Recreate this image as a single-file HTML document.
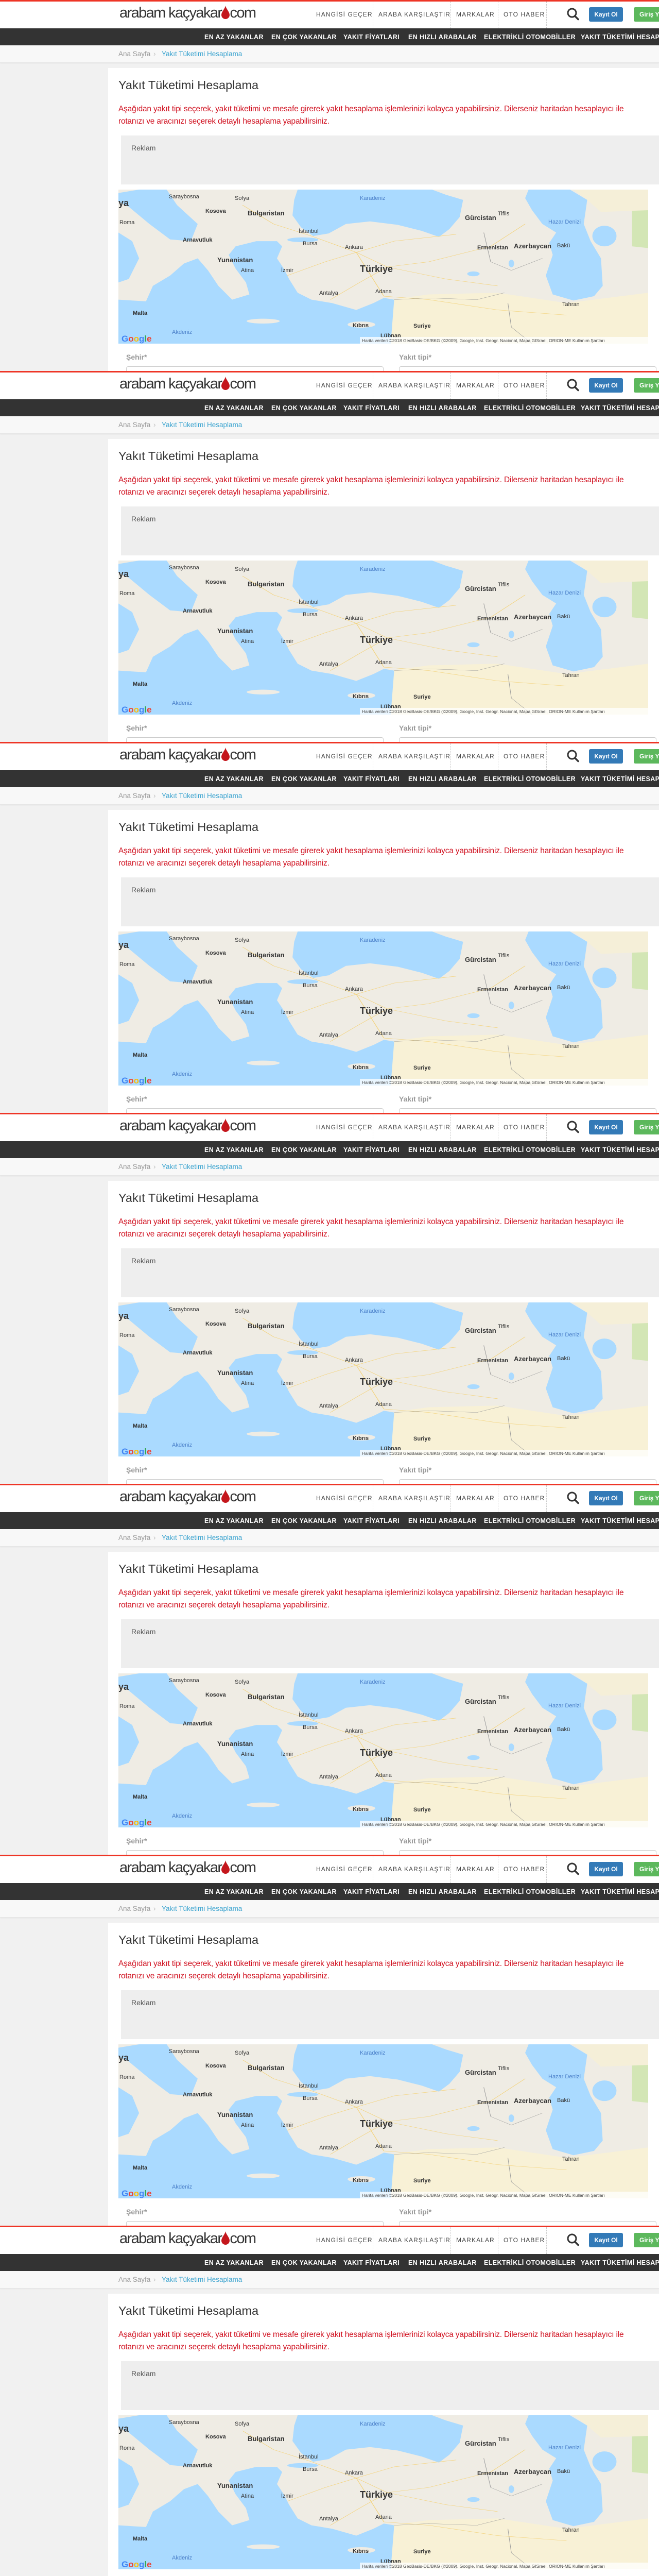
<!DOCTYPE html>
<html style="width:1280px;height:5381px;overflow:hidden"><head><meta charset="utf-8">
<style>
*{margin:0;padding:0;box-sizing:border-box}
html,body{overflow:hidden}
body{width:1280px;height:5381px;background:#f1f1f1;font-family:"Liberation Sans",sans-serif;position:relative;overflow:hidden}
.sec{position:absolute;left:0;width:1280px;height:720px;overflow:hidden;background:#f1f1f1}
.sec.last{height:1061px}
.red{position:absolute;left:0;top:0;width:1280px;height:3px;background:#ee3526}
.hdr{position:absolute;left:0;top:3px;width:1280px;height:52px;background:#fff}
.logo{position:absolute;left:232px;top:9px;font-size:29px;letter-spacing:-1.6px;color:#333;white-space:nowrap}
.logo svg{vertical-align:-3px}
.tm{position:absolute;top:21px;font-size:12px;letter-spacing:1.1px;color:#444;white-space:nowrap}
.sep{position:absolute;top:3px;height:52px;border-left:1px dashed #ccc}
.btn{position:absolute;top:14px;height:28px;border-radius:3px;color:#fff;font-weight:bold;font-size:12px;line-height:28px;text-align:center;white-space:nowrap;overflow:hidden}
.dark{position:absolute;left:0;top:55px;width:1280px;height:33px;background:#333;overflow:hidden}
.dm{position:absolute;top:10px;font-size:12.5px;font-weight:bold;color:#fff;letter-spacing:.4px;white-space:nowrap}
.bc{position:absolute;left:0;top:88px;width:1280px;height:34px;background:#f8f8f8;border-bottom:1px solid #e6e6e6;box-shadow:0 1px 2px rgba(0,0,0,.06);font-size:13.5px;white-space:nowrap}
.box{position:absolute;left:210px;top:132px;width:1070px;height:940px;background:#fff}
.title{position:absolute;left:230px;top:152px;font-size:23.5px;color:#333;white-space:nowrap}
.desc{position:absolute;left:230px;top:200px;width:1050px;overflow:hidden;font-size:15.4px;line-height:24px;color:#d0101f;white-space:nowrap;letter-spacing:-.15px}
.ad{position:absolute;left:235px;top:263px;width:1045px;height:95px;background:#eee}
.ad span{position:absolute;left:20px;top:16px;font-size:14px;color:#555}
.map{position:absolute;left:230px;width:1029px;height:299px;overflow:hidden;background:#efece4}
.lbl{position:absolute;font-size:14px;font-weight:bold;color:#999}
.inp{position:absolute;height:40px;border:1px solid #ccc;border-radius:4px;background:#fff}
</style></head><body>
<svg width="0" height="0" style="position:absolute;left:0;top:0">
<defs>
<g id="mg">
<g transform="scale(0.6695,0.3337)">
<rect width="1537" height="896" fill="#efece4"/>
<polygon fill="#f8f1d6" points="790,640 900,610 1100,600 1300,660 1537,600 1537,896 790,896"/>
<polygon fill="#d3e6b5" points="1490,120 1537,100 1537,340 1490,330"/>
<polygon fill="#f5efd8" points="1320,0 1537,0 1537,120 1400,130 1360,60"/>
<polygon fill="#aadaff" points="60,0 140,0 170,90 230,200 210,300 150,290 90,200 30,100 0,70 0,20"/>
<polygon fill="#aadaff" points="0,250 40,300 60,400 30,520 0,540"/>
<polygon fill="#aadaff" points="0,896 0,640 80,650 100,560 150,500 190,430 230,400 260,470 290,560 330,640 380,610 370,540 340,460 320,380 340,330 400,300 460,300 475,330 460,400 480,460 495,520 520,600 560,640 620,660 690,700 740,660 770,630 800,640 790,896"/>
<polygon fill="#aadaff" points="520,0 910,0 950,30 1000,60 990,160 960,230 930,275 880,240 810,205 730,185 660,200 610,255 565,270 530,220 505,150 510,60"/>
<ellipse fill="#aadaff" cx="535" cy="292" rx="45" ry="14"/>
<polygon fill="#aadaff" points="1190,0 1310,0 1360,60 1350,200 1370,300 1400,400 1405,560 1380,620 1320,645 1260,610 1240,500 1260,380 1250,310 1270,250 1230,200 1200,120 1180,50"/>
<ellipse fill="#aadaff" cx="1410" cy="270" rx="35" ry="60"/>
<ellipse fill="#efece4" cx="420" cy="765" rx="48" ry="14"/>
<ellipse fill="#efece4" cx="705" cy="785" rx="40" ry="18"/>
<ellipse fill="#aadaff" cx="1030" cy="490" rx="18" ry="14"/>
<ellipse fill="#aadaff" cx="1140" cy="430" rx="8" ry="22"/>
<g fill="none" stroke="#f3d27a" stroke-width="2">
<path d="M560,270 L690,365 L780,450 L900,420 L1080,330 L1180,200"/>
<path d="M690,365 L770,620 L900,640 L1100,700 L1300,730"/>
<path d="M490,500 L600,420 L690,365 L800,300 L980,260"/>
<path d="M615,640 L700,540 L780,450 L950,520 L1100,560"/>
<path d="M360,90 L450,200 L560,270"/>
</g>
<g fill="none" stroke="#9a9a9a" stroke-width="1.5">
<path d="M800,640 L900,630 L1040,640 L1120,600"/>
<path d="M1060,250 L1080,420 L1140,470 L1230,400"/>
<path d="M1130,660 L1140,800 L1200,896"/>
</g>
</g>
</g>
</defs>
</svg>

<div class="sec" style="top:0px">
<div class="red"></div><div class="hdr"></div>
<div class="logo">arabam kaçyakar<svg width="16" height="26" viewBox="0 0 16 26"><path d="M8,0 C9,6 16,12 16,18 A8,8 0 0 1 0,18 C0,12 7,6 8,0Z" fill="#c4161c"/></svg>com</div>
<div class="tm" style="left:614px">HANGİSİ GEÇER</div><div class="sep" style="left:724px"></div>
<div class="tm" style="left:735px">ARABA KARŞILAŞTIR</div><div class="sep" style="left:875px"></div>
<div class="tm" style="left:886px">MARKALAR</div><div class="sep" style="left:967px"></div>
<div class="tm" style="left:978px">OTO HABER</div><div class="sep" style="left:1061px"></div>
<svg style="position:absolute;left:1100px;top:15px" width="26" height="26" viewBox="0 0 26 26"><circle cx="11" cy="10" r="8" fill="none" stroke="#333" stroke-width="3"/><path d="M16.5,16 L23,22.5" stroke="#333" stroke-width="3.5" stroke-linecap="round"/></svg>
<div class="btn" style="left:1144px;width:66px;background:#337ab7">Kayıt Ol</div>
<div class="btn" style="left:1231px;width:49px;background:#5cb85c;text-align:left;padding-left:11px;border-radius:3px 0 0 3px">Giriş Yap</div>
<div class="dark"><div class="dm" style="left:397px">EN AZ YAKANLAR</div><div class="dm" style="left:527px">EN ÇOK YAKANLAR</div><div class="dm" style="left:667px">YAKIT FİYATLARI</div><div class="dm" style="left:793px">EN HIZLI ARABALAR</div><div class="dm" style="left:940px">ELEKTRİKLİ OTOMOBİLLER</div><div class="dm" style="left:1128px">YAKIT TÜKETİMİ HESAPLAMA</div></div>
<div class="bc"><span style="position:absolute;left:230px;top:9px;color:#999">Ana Sayfa</span><span style="position:absolute;left:298px;top:9px;color:#bbb">›</span><span style="position:absolute;left:314px;top:9px;color:#3aa3cf">Yakıt Tüketimi Hesaplama</span></div>
<div class="box"></div>
<div class="title">Yakıt Tüketimi Hesaplama</div>
<div class="desc">Aşağıdan yakıt tipi seçerek, yakıt tüketimi ve mesafe girerek yakıt hesaplama işlemlerinizi kolayca yapabilirsiniz. Dilerseniz haritadan hesaplayıcı ile<br>rotanızı ve aracınızı seçerek detaylı hesaplama yapabilirsiniz.</div>
<div class="ad"><span>Reklam</span></div>
<div class="map" style="top:368px"><svg width="1029" height="299" viewBox="0 0 1029 299" font-family="Liberation Sans, sans-serif"><use href="#mg"/><g font-size="11" fill="#333"><text x="469" y="160" font-size="18" font-weight="bold">Türkiye</text><text x="469" y="20" fill="#4a7fc9">Karadeniz</text><text x="251" y="50" font-weight="bold" font-size="13">Bulgaristan</text><text x="192" y="141" font-weight="bold" font-size="13">Yunanistan</text><text x="673" y="59" font-weight="bold" font-size="13">Gürcistan</text><text x="768" y="114" font-weight="bold" font-size="13">Azerbaycan</text><text x="697" y="116" font-weight="bold">Ermenistan</text><text x="835" y="66" fill="#4a7fc9">Hazar Denizi</text><text x="440" y="115">Ankara</text><text x="350" y="84">İstanbul</text><text x="358" y="108">Bursa</text><text x="316" y="160">İzmir</text><text x="238" y="160">Atina</text><text x="390" y="204">Antalya</text><text x="499" y="201">Adana</text><text x="573" y="268" font-weight="bold">Suriye</text><text x="455" y="267" font-weight="bold">Kıbrıs</text><text x="104" y="280" fill="#4a7fc9">Akdeniz</text><text x="28" y="243" font-weight="bold">Malta</text><text x="862" y="226">Tahran</text><text x="226" y="20">Sofya</text><text x="98" y="17">Saraybosna</text><text x="2" y="67">Roma</text><text x="169" y="45" font-weight="bold">Kosova</text><text x="125" y="101" font-weight="bold">Arnavutluk</text><text x="852" y="112">Bakü</text><text x="737" y="50">Tiflis</text><text x="509" y="287" font-weight="bold">Lübnan</text><text x="0" y="32" font-size="18" font-weight="bold">ya</text></g><text x="6" y="295" font-size="17" font-weight="bold"><tspan fill="#4285f4">G</tspan><tspan fill="#ea4335">o</tspan><tspan fill="#fbbc05">o</tspan><tspan fill="#4285f4">g</tspan><tspan fill="#34a853">l</tspan><tspan fill="#ea4335">e</tspan></text><rect x="469" y="286" width="560" height="13" fill="#fff" opacity=".75"/><text x="473" y="296" font-size="8.5" fill="#444">Harita verileri ©2018 GeoBasis-DE/BKG (©2009), Google, Inst. Geogr. Nacional, Mapa GISrael, ORION-ME    Kullanım Şartları</text></svg></div>
<div class="lbl" style="left:245px;top:685px">Şehir*</div><div class="lbl" style="left:775px;top:685px">Yakıt tipi*</div>
<div class="inp" style="left:245px;top:711px;width:500px"></div><div class="inp" style="left:775px;top:711px;width:500px"></div>
</div>

<div class="sec" style="top:720px">
<div class="red"></div><div class="hdr"></div>
<div class="logo">arabam kaçyakar<svg width="16" height="26" viewBox="0 0 16 26"><path d="M8,0 C9,6 16,12 16,18 A8,8 0 0 1 0,18 C0,12 7,6 8,0Z" fill="#c4161c"/></svg>com</div>
<div class="tm" style="left:614px">HANGİSİ GEÇER</div><div class="sep" style="left:724px"></div>
<div class="tm" style="left:735px">ARABA KARŞILAŞTIR</div><div class="sep" style="left:875px"></div>
<div class="tm" style="left:886px">MARKALAR</div><div class="sep" style="left:967px"></div>
<div class="tm" style="left:978px">OTO HABER</div><div class="sep" style="left:1061px"></div>
<svg style="position:absolute;left:1100px;top:15px" width="26" height="26" viewBox="0 0 26 26"><circle cx="11" cy="10" r="8" fill="none" stroke="#333" stroke-width="3"/><path d="M16.5,16 L23,22.5" stroke="#333" stroke-width="3.5" stroke-linecap="round"/></svg>
<div class="btn" style="left:1144px;width:66px;background:#337ab7">Kayıt Ol</div>
<div class="btn" style="left:1231px;width:49px;background:#5cb85c;text-align:left;padding-left:11px;border-radius:3px 0 0 3px">Giriş Yap</div>
<div class="dark"><div class="dm" style="left:397px">EN AZ YAKANLAR</div><div class="dm" style="left:527px">EN ÇOK YAKANLAR</div><div class="dm" style="left:667px">YAKIT FİYATLARI</div><div class="dm" style="left:793px">EN HIZLI ARABALAR</div><div class="dm" style="left:940px">ELEKTRİKLİ OTOMOBİLLER</div><div class="dm" style="left:1128px">YAKIT TÜKETİMİ HESAPLAMA</div></div>
<div class="bc"><span style="position:absolute;left:230px;top:9px;color:#999">Ana Sayfa</span><span style="position:absolute;left:298px;top:9px;color:#bbb">›</span><span style="position:absolute;left:314px;top:9px;color:#3aa3cf">Yakıt Tüketimi Hesaplama</span></div>
<div class="box"></div>
<div class="title">Yakıt Tüketimi Hesaplama</div>
<div class="desc">Aşağıdan yakıt tipi seçerek, yakıt tüketimi ve mesafe girerek yakıt hesaplama işlemlerinizi kolayca yapabilirsiniz. Dilerseniz haritadan hesaplayıcı ile<br>rotanızı ve aracınızı seçerek detaylı hesaplama yapabilirsiniz.</div>
<div class="ad"><span>Reklam</span></div>
<div class="map" style="top:368px"><svg width="1029" height="299" viewBox="0 0 1029 299" font-family="Liberation Sans, sans-serif"><use href="#mg"/><g font-size="11" fill="#333"><text x="469" y="160" font-size="18" font-weight="bold">Türkiye</text><text x="469" y="20" fill="#4a7fc9">Karadeniz</text><text x="251" y="50" font-weight="bold" font-size="13">Bulgaristan</text><text x="192" y="141" font-weight="bold" font-size="13">Yunanistan</text><text x="673" y="59" font-weight="bold" font-size="13">Gürcistan</text><text x="768" y="114" font-weight="bold" font-size="13">Azerbaycan</text><text x="697" y="116" font-weight="bold">Ermenistan</text><text x="835" y="66" fill="#4a7fc9">Hazar Denizi</text><text x="440" y="115">Ankara</text><text x="350" y="84">İstanbul</text><text x="358" y="108">Bursa</text><text x="316" y="160">İzmir</text><text x="238" y="160">Atina</text><text x="390" y="204">Antalya</text><text x="499" y="201">Adana</text><text x="573" y="268" font-weight="bold">Suriye</text><text x="455" y="267" font-weight="bold">Kıbrıs</text><text x="104" y="280" fill="#4a7fc9">Akdeniz</text><text x="28" y="243" font-weight="bold">Malta</text><text x="862" y="226">Tahran</text><text x="226" y="20">Sofya</text><text x="98" y="17">Saraybosna</text><text x="2" y="67">Roma</text><text x="169" y="45" font-weight="bold">Kosova</text><text x="125" y="101" font-weight="bold">Arnavutluk</text><text x="852" y="112">Bakü</text><text x="737" y="50">Tiflis</text><text x="509" y="287" font-weight="bold">Lübnan</text><text x="0" y="32" font-size="18" font-weight="bold">ya</text></g><text x="6" y="295" font-size="17" font-weight="bold"><tspan fill="#4285f4">G</tspan><tspan fill="#ea4335">o</tspan><tspan fill="#fbbc05">o</tspan><tspan fill="#4285f4">g</tspan><tspan fill="#34a853">l</tspan><tspan fill="#ea4335">e</tspan></text><rect x="469" y="286" width="560" height="13" fill="#fff" opacity=".75"/><text x="473" y="296" font-size="8.5" fill="#444">Harita verileri ©2018 GeoBasis-DE/BKG (©2009), Google, Inst. Geogr. Nacional, Mapa GISrael, ORION-ME    Kullanım Şartları</text></svg></div>
<div class="lbl" style="left:245px;top:685px">Şehir*</div><div class="lbl" style="left:775px;top:685px">Yakıt tipi*</div>
<div class="inp" style="left:245px;top:711px;width:500px"></div><div class="inp" style="left:775px;top:711px;width:500px"></div>
</div>

<div class="sec" style="top:1440px">
<div class="red"></div><div class="hdr"></div>
<div class="logo">arabam kaçyakar<svg width="16" height="26" viewBox="0 0 16 26"><path d="M8,0 C9,6 16,12 16,18 A8,8 0 0 1 0,18 C0,12 7,6 8,0Z" fill="#c4161c"/></svg>com</div>
<div class="tm" style="left:614px">HANGİSİ GEÇER</div><div class="sep" style="left:724px"></div>
<div class="tm" style="left:735px">ARABA KARŞILAŞTIR</div><div class="sep" style="left:875px"></div>
<div class="tm" style="left:886px">MARKALAR</div><div class="sep" style="left:967px"></div>
<div class="tm" style="left:978px">OTO HABER</div><div class="sep" style="left:1061px"></div>
<svg style="position:absolute;left:1100px;top:15px" width="26" height="26" viewBox="0 0 26 26"><circle cx="11" cy="10" r="8" fill="none" stroke="#333" stroke-width="3"/><path d="M16.5,16 L23,22.5" stroke="#333" stroke-width="3.5" stroke-linecap="round"/></svg>
<div class="btn" style="left:1144px;width:66px;background:#337ab7">Kayıt Ol</div>
<div class="btn" style="left:1231px;width:49px;background:#5cb85c;text-align:left;padding-left:11px;border-radius:3px 0 0 3px">Giriş Yap</div>
<div class="dark"><div class="dm" style="left:397px">EN AZ YAKANLAR</div><div class="dm" style="left:527px">EN ÇOK YAKANLAR</div><div class="dm" style="left:667px">YAKIT FİYATLARI</div><div class="dm" style="left:793px">EN HIZLI ARABALAR</div><div class="dm" style="left:940px">ELEKTRİKLİ OTOMOBİLLER</div><div class="dm" style="left:1128px">YAKIT TÜKETİMİ HESAPLAMA</div></div>
<div class="bc"><span style="position:absolute;left:230px;top:9px;color:#999">Ana Sayfa</span><span style="position:absolute;left:298px;top:9px;color:#bbb">›</span><span style="position:absolute;left:314px;top:9px;color:#3aa3cf">Yakıt Tüketimi Hesaplama</span></div>
<div class="box"></div>
<div class="title">Yakıt Tüketimi Hesaplama</div>
<div class="desc">Aşağıdan yakıt tipi seçerek, yakıt tüketimi ve mesafe girerek yakıt hesaplama işlemlerinizi kolayca yapabilirsiniz. Dilerseniz haritadan hesaplayıcı ile<br>rotanızı ve aracınızı seçerek detaylı hesaplama yapabilirsiniz.</div>
<div class="ad"><span>Reklam</span></div>
<div class="map" style="top:368px"><svg width="1029" height="299" viewBox="0 0 1029 299" font-family="Liberation Sans, sans-serif"><use href="#mg"/><g font-size="11" fill="#333"><text x="469" y="160" font-size="18" font-weight="bold">Türkiye</text><text x="469" y="20" fill="#4a7fc9">Karadeniz</text><text x="251" y="50" font-weight="bold" font-size="13">Bulgaristan</text><text x="192" y="141" font-weight="bold" font-size="13">Yunanistan</text><text x="673" y="59" font-weight="bold" font-size="13">Gürcistan</text><text x="768" y="114" font-weight="bold" font-size="13">Azerbaycan</text><text x="697" y="116" font-weight="bold">Ermenistan</text><text x="835" y="66" fill="#4a7fc9">Hazar Denizi</text><text x="440" y="115">Ankara</text><text x="350" y="84">İstanbul</text><text x="358" y="108">Bursa</text><text x="316" y="160">İzmir</text><text x="238" y="160">Atina</text><text x="390" y="204">Antalya</text><text x="499" y="201">Adana</text><text x="573" y="268" font-weight="bold">Suriye</text><text x="455" y="267" font-weight="bold">Kıbrıs</text><text x="104" y="280" fill="#4a7fc9">Akdeniz</text><text x="28" y="243" font-weight="bold">Malta</text><text x="862" y="226">Tahran</text><text x="226" y="20">Sofya</text><text x="98" y="17">Saraybosna</text><text x="2" y="67">Roma</text><text x="169" y="45" font-weight="bold">Kosova</text><text x="125" y="101" font-weight="bold">Arnavutluk</text><text x="852" y="112">Bakü</text><text x="737" y="50">Tiflis</text><text x="509" y="287" font-weight="bold">Lübnan</text><text x="0" y="32" font-size="18" font-weight="bold">ya</text></g><text x="6" y="295" font-size="17" font-weight="bold"><tspan fill="#4285f4">G</tspan><tspan fill="#ea4335">o</tspan><tspan fill="#fbbc05">o</tspan><tspan fill="#4285f4">g</tspan><tspan fill="#34a853">l</tspan><tspan fill="#ea4335">e</tspan></text><rect x="469" y="286" width="560" height="13" fill="#fff" opacity=".75"/><text x="473" y="296" font-size="8.5" fill="#444">Harita verileri ©2018 GeoBasis-DE/BKG (©2009), Google, Inst. Geogr. Nacional, Mapa GISrael, ORION-ME    Kullanım Şartları</text></svg></div>
<div class="lbl" style="left:245px;top:685px">Şehir*</div><div class="lbl" style="left:775px;top:685px">Yakıt tipi*</div>
<div class="inp" style="left:245px;top:711px;width:500px"></div><div class="inp" style="left:775px;top:711px;width:500px"></div>
</div>

<div class="sec" style="top:2160px">
<div class="red"></div><div class="hdr"></div>
<div class="logo">arabam kaçyakar<svg width="16" height="26" viewBox="0 0 16 26"><path d="M8,0 C9,6 16,12 16,18 A8,8 0 0 1 0,18 C0,12 7,6 8,0Z" fill="#c4161c"/></svg>com</div>
<div class="tm" style="left:614px">HANGİSİ GEÇER</div><div class="sep" style="left:724px"></div>
<div class="tm" style="left:735px">ARABA KARŞILAŞTIR</div><div class="sep" style="left:875px"></div>
<div class="tm" style="left:886px">MARKALAR</div><div class="sep" style="left:967px"></div>
<div class="tm" style="left:978px">OTO HABER</div><div class="sep" style="left:1061px"></div>
<svg style="position:absolute;left:1100px;top:15px" width="26" height="26" viewBox="0 0 26 26"><circle cx="11" cy="10" r="8" fill="none" stroke="#333" stroke-width="3"/><path d="M16.5,16 L23,22.5" stroke="#333" stroke-width="3.5" stroke-linecap="round"/></svg>
<div class="btn" style="left:1144px;width:66px;background:#337ab7">Kayıt Ol</div>
<div class="btn" style="left:1231px;width:49px;background:#5cb85c;text-align:left;padding-left:11px;border-radius:3px 0 0 3px">Giriş Yap</div>
<div class="dark"><div class="dm" style="left:397px">EN AZ YAKANLAR</div><div class="dm" style="left:527px">EN ÇOK YAKANLAR</div><div class="dm" style="left:667px">YAKIT FİYATLARI</div><div class="dm" style="left:793px">EN HIZLI ARABALAR</div><div class="dm" style="left:940px">ELEKTRİKLİ OTOMOBİLLER</div><div class="dm" style="left:1128px">YAKIT TÜKETİMİ HESAPLAMA</div></div>
<div class="bc"><span style="position:absolute;left:230px;top:9px;color:#999">Ana Sayfa</span><span style="position:absolute;left:298px;top:9px;color:#bbb">›</span><span style="position:absolute;left:314px;top:9px;color:#3aa3cf">Yakıt Tüketimi Hesaplama</span></div>
<div class="box"></div>
<div class="title">Yakıt Tüketimi Hesaplama</div>
<div class="desc">Aşağıdan yakıt tipi seçerek, yakıt tüketimi ve mesafe girerek yakıt hesaplama işlemlerinizi kolayca yapabilirsiniz. Dilerseniz haritadan hesaplayıcı ile<br>rotanızı ve aracınızı seçerek detaylı hesaplama yapabilirsiniz.</div>
<div class="ad"><span>Reklam</span></div>
<div class="map" style="top:368px"><svg width="1029" height="299" viewBox="0 0 1029 299" font-family="Liberation Sans, sans-serif"><use href="#mg"/><g font-size="11" fill="#333"><text x="469" y="160" font-size="18" font-weight="bold">Türkiye</text><text x="469" y="20" fill="#4a7fc9">Karadeniz</text><text x="251" y="50" font-weight="bold" font-size="13">Bulgaristan</text><text x="192" y="141" font-weight="bold" font-size="13">Yunanistan</text><text x="673" y="59" font-weight="bold" font-size="13">Gürcistan</text><text x="768" y="114" font-weight="bold" font-size="13">Azerbaycan</text><text x="697" y="116" font-weight="bold">Ermenistan</text><text x="835" y="66" fill="#4a7fc9">Hazar Denizi</text><text x="440" y="115">Ankara</text><text x="350" y="84">İstanbul</text><text x="358" y="108">Bursa</text><text x="316" y="160">İzmir</text><text x="238" y="160">Atina</text><text x="390" y="204">Antalya</text><text x="499" y="201">Adana</text><text x="573" y="268" font-weight="bold">Suriye</text><text x="455" y="267" font-weight="bold">Kıbrıs</text><text x="104" y="280" fill="#4a7fc9">Akdeniz</text><text x="28" y="243" font-weight="bold">Malta</text><text x="862" y="226">Tahran</text><text x="226" y="20">Sofya</text><text x="98" y="17">Saraybosna</text><text x="2" y="67">Roma</text><text x="169" y="45" font-weight="bold">Kosova</text><text x="125" y="101" font-weight="bold">Arnavutluk</text><text x="852" y="112">Bakü</text><text x="737" y="50">Tiflis</text><text x="509" y="287" font-weight="bold">Lübnan</text><text x="0" y="32" font-size="18" font-weight="bold">ya</text></g><text x="6" y="295" font-size="17" font-weight="bold"><tspan fill="#4285f4">G</tspan><tspan fill="#ea4335">o</tspan><tspan fill="#fbbc05">o</tspan><tspan fill="#4285f4">g</tspan><tspan fill="#34a853">l</tspan><tspan fill="#ea4335">e</tspan></text><rect x="469" y="286" width="560" height="13" fill="#fff" opacity=".75"/><text x="473" y="296" font-size="8.5" fill="#444">Harita verileri ©2018 GeoBasis-DE/BKG (©2009), Google, Inst. Geogr. Nacional, Mapa GISrael, ORION-ME    Kullanım Şartları</text></svg></div>
<div class="lbl" style="left:245px;top:685px">Şehir*</div><div class="lbl" style="left:775px;top:685px">Yakıt tipi*</div>
<div class="inp" style="left:245px;top:711px;width:500px"></div><div class="inp" style="left:775px;top:711px;width:500px"></div>
</div>

<div class="sec" style="top:2880px">
<div class="red"></div><div class="hdr"></div>
<div class="logo">arabam kaçyakar<svg width="16" height="26" viewBox="0 0 16 26"><path d="M8,0 C9,6 16,12 16,18 A8,8 0 0 1 0,18 C0,12 7,6 8,0Z" fill="#c4161c"/></svg>com</div>
<div class="tm" style="left:614px">HANGİSİ GEÇER</div><div class="sep" style="left:724px"></div>
<div class="tm" style="left:735px">ARABA KARŞILAŞTIR</div><div class="sep" style="left:875px"></div>
<div class="tm" style="left:886px">MARKALAR</div><div class="sep" style="left:967px"></div>
<div class="tm" style="left:978px">OTO HABER</div><div class="sep" style="left:1061px"></div>
<svg style="position:absolute;left:1100px;top:15px" width="26" height="26" viewBox="0 0 26 26"><circle cx="11" cy="10" r="8" fill="none" stroke="#333" stroke-width="3"/><path d="M16.5,16 L23,22.5" stroke="#333" stroke-width="3.5" stroke-linecap="round"/></svg>
<div class="btn" style="left:1144px;width:66px;background:#337ab7">Kayıt Ol</div>
<div class="btn" style="left:1231px;width:49px;background:#5cb85c;text-align:left;padding-left:11px;border-radius:3px 0 0 3px">Giriş Yap</div>
<div class="dark"><div class="dm" style="left:397px">EN AZ YAKANLAR</div><div class="dm" style="left:527px">EN ÇOK YAKANLAR</div><div class="dm" style="left:667px">YAKIT FİYATLARI</div><div class="dm" style="left:793px">EN HIZLI ARABALAR</div><div class="dm" style="left:940px">ELEKTRİKLİ OTOMOBİLLER</div><div class="dm" style="left:1128px">YAKIT TÜKETİMİ HESAPLAMA</div></div>
<div class="bc"><span style="position:absolute;left:230px;top:9px;color:#999">Ana Sayfa</span><span style="position:absolute;left:298px;top:9px;color:#bbb">›</span><span style="position:absolute;left:314px;top:9px;color:#3aa3cf">Yakıt Tüketimi Hesaplama</span></div>
<div class="box"></div>
<div class="title">Yakıt Tüketimi Hesaplama</div>
<div class="desc">Aşağıdan yakıt tipi seçerek, yakıt tüketimi ve mesafe girerek yakıt hesaplama işlemlerinizi kolayca yapabilirsiniz. Dilerseniz haritadan hesaplayıcı ile<br>rotanızı ve aracınızı seçerek detaylı hesaplama yapabilirsiniz.</div>
<div class="ad"><span>Reklam</span></div>
<div class="map" style="top:368px"><svg width="1029" height="299" viewBox="0 0 1029 299" font-family="Liberation Sans, sans-serif"><use href="#mg"/><g font-size="11" fill="#333"><text x="469" y="160" font-size="18" font-weight="bold">Türkiye</text><text x="469" y="20" fill="#4a7fc9">Karadeniz</text><text x="251" y="50" font-weight="bold" font-size="13">Bulgaristan</text><text x="192" y="141" font-weight="bold" font-size="13">Yunanistan</text><text x="673" y="59" font-weight="bold" font-size="13">Gürcistan</text><text x="768" y="114" font-weight="bold" font-size="13">Azerbaycan</text><text x="697" y="116" font-weight="bold">Ermenistan</text><text x="835" y="66" fill="#4a7fc9">Hazar Denizi</text><text x="440" y="115">Ankara</text><text x="350" y="84">İstanbul</text><text x="358" y="108">Bursa</text><text x="316" y="160">İzmir</text><text x="238" y="160">Atina</text><text x="390" y="204">Antalya</text><text x="499" y="201">Adana</text><text x="573" y="268" font-weight="bold">Suriye</text><text x="455" y="267" font-weight="bold">Kıbrıs</text><text x="104" y="280" fill="#4a7fc9">Akdeniz</text><text x="28" y="243" font-weight="bold">Malta</text><text x="862" y="226">Tahran</text><text x="226" y="20">Sofya</text><text x="98" y="17">Saraybosna</text><text x="2" y="67">Roma</text><text x="169" y="45" font-weight="bold">Kosova</text><text x="125" y="101" font-weight="bold">Arnavutluk</text><text x="852" y="112">Bakü</text><text x="737" y="50">Tiflis</text><text x="509" y="287" font-weight="bold">Lübnan</text><text x="0" y="32" font-size="18" font-weight="bold">ya</text></g><text x="6" y="295" font-size="17" font-weight="bold"><tspan fill="#4285f4">G</tspan><tspan fill="#ea4335">o</tspan><tspan fill="#fbbc05">o</tspan><tspan fill="#4285f4">g</tspan><tspan fill="#34a853">l</tspan><tspan fill="#ea4335">e</tspan></text><rect x="469" y="286" width="560" height="13" fill="#fff" opacity=".75"/><text x="473" y="296" font-size="8.5" fill="#444">Harita verileri ©2018 GeoBasis-DE/BKG (©2009), Google, Inst. Geogr. Nacional, Mapa GISrael, ORION-ME    Kullanım Şartları</text></svg></div>
<div class="lbl" style="left:245px;top:685px">Şehir*</div><div class="lbl" style="left:775px;top:685px">Yakıt tipi*</div>
<div class="inp" style="left:245px;top:711px;width:500px"></div><div class="inp" style="left:775px;top:711px;width:500px"></div>
</div>

<div class="sec" style="top:3600px">
<div class="red"></div><div class="hdr"></div>
<div class="logo">arabam kaçyakar<svg width="16" height="26" viewBox="0 0 16 26"><path d="M8,0 C9,6 16,12 16,18 A8,8 0 0 1 0,18 C0,12 7,6 8,0Z" fill="#c4161c"/></svg>com</div>
<div class="tm" style="left:614px">HANGİSİ GEÇER</div><div class="sep" style="left:724px"></div>
<div class="tm" style="left:735px">ARABA KARŞILAŞTIR</div><div class="sep" style="left:875px"></div>
<div class="tm" style="left:886px">MARKALAR</div><div class="sep" style="left:967px"></div>
<div class="tm" style="left:978px">OTO HABER</div><div class="sep" style="left:1061px"></div>
<svg style="position:absolute;left:1100px;top:15px" width="26" height="26" viewBox="0 0 26 26"><circle cx="11" cy="10" r="8" fill="none" stroke="#333" stroke-width="3"/><path d="M16.5,16 L23,22.5" stroke="#333" stroke-width="3.5" stroke-linecap="round"/></svg>
<div class="btn" style="left:1144px;width:66px;background:#337ab7">Kayıt Ol</div>
<div class="btn" style="left:1231px;width:49px;background:#5cb85c;text-align:left;padding-left:11px;border-radius:3px 0 0 3px">Giriş Yap</div>
<div class="dark"><div class="dm" style="left:397px">EN AZ YAKANLAR</div><div class="dm" style="left:527px">EN ÇOK YAKANLAR</div><div class="dm" style="left:667px">YAKIT FİYATLARI</div><div class="dm" style="left:793px">EN HIZLI ARABALAR</div><div class="dm" style="left:940px">ELEKTRİKLİ OTOMOBİLLER</div><div class="dm" style="left:1128px">YAKIT TÜKETİMİ HESAPLAMA</div></div>
<div class="bc"><span style="position:absolute;left:230px;top:9px;color:#999">Ana Sayfa</span><span style="position:absolute;left:298px;top:9px;color:#bbb">›</span><span style="position:absolute;left:314px;top:9px;color:#3aa3cf">Yakıt Tüketimi Hesaplama</span></div>
<div class="box"></div>
<div class="title">Yakıt Tüketimi Hesaplama</div>
<div class="desc">Aşağıdan yakıt tipi seçerek, yakıt tüketimi ve mesafe girerek yakıt hesaplama işlemlerinizi kolayca yapabilirsiniz. Dilerseniz haritadan hesaplayıcı ile<br>rotanızı ve aracınızı seçerek detaylı hesaplama yapabilirsiniz.</div>
<div class="ad"><span>Reklam</span></div>
<div class="map" style="top:368px"><svg width="1029" height="299" viewBox="0 0 1029 299" font-family="Liberation Sans, sans-serif"><use href="#mg"/><g font-size="11" fill="#333"><text x="469" y="160" font-size="18" font-weight="bold">Türkiye</text><text x="469" y="20" fill="#4a7fc9">Karadeniz</text><text x="251" y="50" font-weight="bold" font-size="13">Bulgaristan</text><text x="192" y="141" font-weight="bold" font-size="13">Yunanistan</text><text x="673" y="59" font-weight="bold" font-size="13">Gürcistan</text><text x="768" y="114" font-weight="bold" font-size="13">Azerbaycan</text><text x="697" y="116" font-weight="bold">Ermenistan</text><text x="835" y="66" fill="#4a7fc9">Hazar Denizi</text><text x="440" y="115">Ankara</text><text x="350" y="84">İstanbul</text><text x="358" y="108">Bursa</text><text x="316" y="160">İzmir</text><text x="238" y="160">Atina</text><text x="390" y="204">Antalya</text><text x="499" y="201">Adana</text><text x="573" y="268" font-weight="bold">Suriye</text><text x="455" y="267" font-weight="bold">Kıbrıs</text><text x="104" y="280" fill="#4a7fc9">Akdeniz</text><text x="28" y="243" font-weight="bold">Malta</text><text x="862" y="226">Tahran</text><text x="226" y="20">Sofya</text><text x="98" y="17">Saraybosna</text><text x="2" y="67">Roma</text><text x="169" y="45" font-weight="bold">Kosova</text><text x="125" y="101" font-weight="bold">Arnavutluk</text><text x="852" y="112">Bakü</text><text x="737" y="50">Tiflis</text><text x="509" y="287" font-weight="bold">Lübnan</text><text x="0" y="32" font-size="18" font-weight="bold">ya</text></g><text x="6" y="295" font-size="17" font-weight="bold"><tspan fill="#4285f4">G</tspan><tspan fill="#ea4335">o</tspan><tspan fill="#fbbc05">o</tspan><tspan fill="#4285f4">g</tspan><tspan fill="#34a853">l</tspan><tspan fill="#ea4335">e</tspan></text><rect x="469" y="286" width="560" height="13" fill="#fff" opacity=".75"/><text x="473" y="296" font-size="8.5" fill="#444">Harita verileri ©2018 GeoBasis-DE/BKG (©2009), Google, Inst. Geogr. Nacional, Mapa GISrael, ORION-ME    Kullanım Şartları</text></svg></div>
<div class="lbl" style="left:245px;top:685px">Şehir*</div><div class="lbl" style="left:775px;top:685px">Yakıt tipi*</div>
<div class="inp" style="left:245px;top:711px;width:500px"></div><div class="inp" style="left:775px;top:711px;width:500px"></div>
</div>

<div class="sec last" style="top:4320px">
<div class="red"></div><div class="hdr"></div>
<div class="logo">arabam kaçyakar<svg width="16" height="26" viewBox="0 0 16 26"><path d="M8,0 C9,6 16,12 16,18 A8,8 0 0 1 0,18 C0,12 7,6 8,0Z" fill="#c4161c"/></svg>com</div>
<div class="tm" style="left:614px">HANGİSİ GEÇER</div><div class="sep" style="left:724px"></div>
<div class="tm" style="left:735px">ARABA KARŞILAŞTIR</div><div class="sep" style="left:875px"></div>
<div class="tm" style="left:886px">MARKALAR</div><div class="sep" style="left:967px"></div>
<div class="tm" style="left:978px">OTO HABER</div><div class="sep" style="left:1061px"></div>
<svg style="position:absolute;left:1100px;top:15px" width="26" height="26" viewBox="0 0 26 26"><circle cx="11" cy="10" r="8" fill="none" stroke="#333" stroke-width="3"/><path d="M16.5,16 L23,22.5" stroke="#333" stroke-width="3.5" stroke-linecap="round"/></svg>
<div class="btn" style="left:1144px;width:66px;background:#337ab7">Kayıt Ol</div>
<div class="btn" style="left:1231px;width:49px;background:#5cb85c;text-align:left;padding-left:11px;border-radius:3px 0 0 3px">Giriş Yap</div>
<div class="dark"><div class="dm" style="left:397px">EN AZ YAKANLAR</div><div class="dm" style="left:527px">EN ÇOK YAKANLAR</div><div class="dm" style="left:667px">YAKIT FİYATLARI</div><div class="dm" style="left:793px">EN HIZLI ARABALAR</div><div class="dm" style="left:940px">ELEKTRİKLİ OTOMOBİLLER</div><div class="dm" style="left:1128px">YAKIT TÜKETİMİ HESAPLAMA</div></div>
<div class="bc"><span style="position:absolute;left:230px;top:9px;color:#999">Ana Sayfa</span><span style="position:absolute;left:298px;top:9px;color:#bbb">›</span><span style="position:absolute;left:314px;top:9px;color:#3aa3cf">Yakıt Tüketimi Hesaplama</span></div>
<div class="box"></div>
<div class="title">Yakıt Tüketimi Hesaplama</div>
<div class="desc">Aşağıdan yakıt tipi seçerek, yakıt tüketimi ve mesafe girerek yakıt hesaplama işlemlerinizi kolayca yapabilirsiniz. Dilerseniz haritadan hesaplayıcı ile<br>rotanızı ve aracınızı seçerek detaylı hesaplama yapabilirsiniz.</div>
<div class="ad"><span>Reklam</span></div>
<div class="map" style="top:368px"><svg width="1029" height="299" viewBox="0 0 1029 299" font-family="Liberation Sans, sans-serif"><use href="#mg"/><g font-size="11" fill="#333"><text x="469" y="160" font-size="18" font-weight="bold">Türkiye</text><text x="469" y="20" fill="#4a7fc9">Karadeniz</text><text x="251" y="50" font-weight="bold" font-size="13">Bulgaristan</text><text x="192" y="141" font-weight="bold" font-size="13">Yunanistan</text><text x="673" y="59" font-weight="bold" font-size="13">Gürcistan</text><text x="768" y="114" font-weight="bold" font-size="13">Azerbaycan</text><text x="697" y="116" font-weight="bold">Ermenistan</text><text x="835" y="66" fill="#4a7fc9">Hazar Denizi</text><text x="440" y="115">Ankara</text><text x="350" y="84">İstanbul</text><text x="358" y="108">Bursa</text><text x="316" y="160">İzmir</text><text x="238" y="160">Atina</text><text x="390" y="204">Antalya</text><text x="499" y="201">Adana</text><text x="573" y="268" font-weight="bold">Suriye</text><text x="455" y="267" font-weight="bold">Kıbrıs</text><text x="104" y="280" fill="#4a7fc9">Akdeniz</text><text x="28" y="243" font-weight="bold">Malta</text><text x="862" y="226">Tahran</text><text x="226" y="20">Sofya</text><text x="98" y="17">Saraybosna</text><text x="2" y="67">Roma</text><text x="169" y="45" font-weight="bold">Kosova</text><text x="125" y="101" font-weight="bold">Arnavutluk</text><text x="852" y="112">Bakü</text><text x="737" y="50">Tiflis</text><text x="509" y="287" font-weight="bold">Lübnan</text><text x="0" y="32" font-size="18" font-weight="bold">ya</text></g><text x="6" y="295" font-size="17" font-weight="bold"><tspan fill="#4285f4">G</tspan><tspan fill="#ea4335">o</tspan><tspan fill="#fbbc05">o</tspan><tspan fill="#4285f4">g</tspan><tspan fill="#34a853">l</tspan><tspan fill="#ea4335">e</tspan></text><rect x="469" y="286" width="560" height="13" fill="#fff" opacity=".75"/><text x="473" y="296" font-size="8.5" fill="#444">Harita verileri ©2018 GeoBasis-DE/BKG (©2009), Google, Inst. Geogr. Nacional, Mapa GISrael, ORION-ME    Kullanım Şartları</text></svg></div>
<div class="lbl" style="left:245px;top:685px">Şehir*</div><div class="lbl" style="left:775px;top:685px">Yakıt tipi*</div>
<div class="inp" style="left:245px;top:711px;width:500px"></div><div class="inp" style="left:775px;top:711px;width:500px"></div>
<div class="map" style="top:720px;height:288px"><svg style="margin-top:-10px;display:block" width="1029" height="299" viewBox="0 0 1029 299" font-family="Liberation Sans, sans-serif"><use href="#mg"/><g font-size="11" fill="#333"><text x="469" y="160" font-size="18" font-weight="bold">Türkiye</text><text x="469" y="20" fill="#4a7fc9">Karadeniz</text><text x="251" y="50" font-weight="bold" font-size="13">Bulgaristan</text><text x="192" y="141" font-weight="bold" font-size="13">Yunanistan</text><text x="673" y="59" font-weight="bold" font-size="13">Gürcistan</text><text x="768" y="114" font-weight="bold" font-size="13">Azerbaycan</text><text x="697" y="116" font-weight="bold">Ermenistan</text><text x="835" y="66" fill="#4a7fc9">Hazar Denizi</text><text x="440" y="115">Ankara</text><text x="350" y="84">İstanbul</text><text x="358" y="108">Bursa</text><text x="316" y="160">İzmir</text><text x="238" y="160">Atina</text><text x="390" y="204">Antalya</text><text x="499" y="201">Adana</text><text x="573" y="268" font-weight="bold">Suriye</text><text x="455" y="267" font-weight="bold">Kıbrıs</text><text x="104" y="280" fill="#4a7fc9">Akdeniz</text><text x="28" y="243" font-weight="bold">Malta</text><text x="862" y="226">Tahran</text><text x="226" y="20">Sofya</text><text x="98" y="17">Saraybosna</text><text x="2" y="67">Roma</text><text x="169" y="45" font-weight="bold">Kosova</text><text x="125" y="101" font-weight="bold">Arnavutluk</text><text x="852" y="112">Bakü</text><text x="737" y="50">Tiflis</text><text x="509" y="287" font-weight="bold">Lübnan</text><text x="0" y="32" font-size="18" font-weight="bold">ya</text></g><text x="6" y="295" font-size="17" font-weight="bold"><tspan fill="#4285f4">G</tspan><tspan fill="#ea4335">o</tspan><tspan fill="#fbbc05">o</tspan><tspan fill="#4285f4">g</tspan><tspan fill="#34a853">l</tspan><tspan fill="#ea4335">e</tspan></text><rect x="469" y="286" width="560" height="13" fill="#fff" opacity=".75"/><text x="473" y="296" font-size="8.5" fill="#444">Harita verileri ©2018 GeoBasis-DE/BKG (©2009), Google, Inst. Geogr. Nacional, Mapa GISrael, ORION-ME    Kullanım Şartları</text></svg></div>
<div class="lbl" style="left:245px;top:1027px">Şehir*</div><div class="lbl" style="left:775px;top:1027px">Yakıt tipi*</div>
<div class="inp" style="left:245px;top:1052px;width:500px"></div><div class="inp" style="left:775px;top:1052px;width:500px"></div>
</div>
</body></html>
